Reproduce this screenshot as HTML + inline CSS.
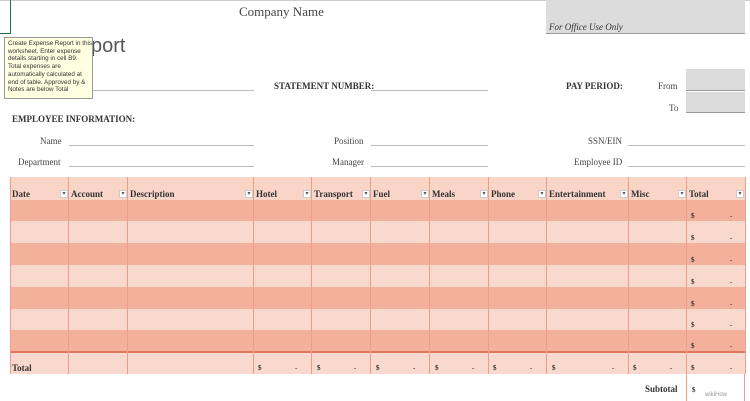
<!DOCTYPE html>
<html><head><meta charset="utf-8"><style>
*{margin:0;padding:0;box-sizing:border-box}
body{width:750px;height:401px;background:#fff;position:relative;overflow:hidden;font-family:"Liberation Serif",serif;color:#333}
.a{position:absolute;white-space:nowrap}
.ln{position:absolute;height:1px;background:#bbb}
.lbl{font-size:9px;color:#444}
.b{font-weight:bold;font-size:9px;color:#333}
.col{position:absolute;top:177px;height:197px;width:1px;background:#e8a08c}
.row{position:absolute;left:10px;width:735px}
.dd{position:absolute;width:8px;height:8px;background:#fff;border:1px solid #ccc;font-size:6px;line-height:6px;text-align:center;color:#555}
.s{position:absolute;font-size:7px;font-weight:bold;color:#333}
</style></head><body>
<div class="ln" style="left:0;top:0;width:750px;background:#ccc"></div>
<div class="a" style="left:0;top:0;width:11px;height:34px;border:1px solid #217346;border-left:none;border-top:none"></div>
<div class="a" style="left:239px;top:4px;font-size:13px;color:#444">Company Name</div>
<div class="a" style="left:546px;top:0;width:199px;height:34px;background:#dcdcdc;border-bottom:1px solid #999"></div>
<div class="a" style="left:549px;top:22px;font-size:9px;font-style:italic;color:#333">For Office Use Only</div>
<div class="a" style="left:91px;top:35px;font-family:'Liberation Sans',sans-serif;font-size:20px;color:#555">port</div>
<div class="a" style="left:4px;top:37px;width:89px;height:62px;background:#ffffe1;border:1px solid #999;font-family:'Liberation Sans',sans-serif;font-size:6.3px;line-height:7.7px;color:#333;padding:2px 3px">Create Expense Report in this<br>worksheet. Enter expense<br>details starting in cell B9.<br>Total expenses are<br>automatically calculated at<br>end of table. Approved by &amp;<br>Notes are below Total</div>
<div class="ln" style="left:93px;top:90px;width:161px"></div>
<div class="a b" style="left:274px;top:81px">STATEMENT NUMBER:</div>
<div class="ln" style="left:371px;top:90px;width:117px"></div>
<div class="a b" style="left:566px;top:81px">PAY PERIOD:</div>
<div class="a lbl" style="left:658px;top:81px">From</div>
<div class="a" style="left:686px;top:69px;width:59px;height:22px;background:#dcdcdc;border-bottom:1px solid #999"></div>
<div class="a lbl" style="left:669px;top:103px">To</div>
<div class="a" style="left:686px;top:92px;width:59px;height:21px;background:#dcdcdc;border-bottom:1px solid #999"></div>
<div class="a b" style="left:12px;top:114px">EMPLOYEE INFORMATION:</div>
<div class="a lbl" style="left:40px;top:136px">Name</div>
<div class="ln" style="left:69px;top:145px;width:185px"></div>
<div class="a lbl" style="left:334px;top:136px">Position</div>
<div class="ln" style="left:371px;top:145px;width:117px"></div>
<div class="a lbl" style="left:588px;top:136px">SSN/EIN</div>
<div class="ln" style="left:628px;top:145px;width:117px"></div>
<div class="a lbl" style="left:18px;top:157px">Department</div>
<div class="ln" style="left:69px;top:166px;width:185px"></div>
<div class="a lbl" style="left:332px;top:157px">Manager</div>
<div class="ln" style="left:371px;top:166px;width:117px"></div>
<div class="a lbl" style="left:574px;top:157px">Employee ID</div>
<div class="ln" style="left:628px;top:166px;width:117px"></div>
<div class="row" style="top:177px;height:23px;background:#f9d5c8"></div>
<div class="row" style="top:200px;height:21px;background:#f3b09b"></div>
<div class="row" style="top:221px;height:22px;background:#f9d9cd"></div>
<div class="row" style="top:243px;height:22px;background:#f3b09b"></div>
<div class="row" style="top:265px;height:22px;background:#f9d9cd"></div>
<div class="row" style="top:287px;height:22px;background:#f3b09b"></div>
<div class="row" style="top:309px;height:21px;background:#f9d9cd"></div>
<div class="row" style="top:330px;height:21px;background:#f3b09b"></div>
<div class="row" style="top:351px;height:23px;background:#f9d9cd;border-top:2px solid #e07860"></div>
<div class="col" style="left:10px"></div><div class="col" style="left:68px"></div><div class="col" style="left:127px"></div><div class="col" style="left:253px"></div><div class="col" style="left:311px"></div><div class="col" style="left:370px"></div><div class="col" style="left:429px"></div><div class="col" style="left:488px"></div><div class="col" style="left:546px"></div><div class="col" style="left:628px"></div><div class="col" style="left:686px"></div><div class="col" style="left:745px"></div>
<div class="a b" style="left:12px;top:189px">Date</div><div class="dd" style="left:60px;top:190px">▾</div>
<div class="a b" style="left:71px;top:189px">Account</div><div class="dd" style="left:119px;top:190px">▾</div>
<div class="a b" style="left:130px;top:189px">Description</div><div class="dd" style="left:245px;top:190px">▾</div>
<div class="a b" style="left:256px;top:189px">Hotel</div><div class="dd" style="left:303px;top:190px">▾</div>
<div class="a b" style="left:314px;top:189px">Transport</div><div class="dd" style="left:362px;top:190px">▾</div>
<div class="a b" style="left:373px;top:189px">Fuel</div><div class="dd" style="left:421px;top:190px">▾</div>
<div class="a b" style="left:432px;top:189px">Meals</div><div class="dd" style="left:480px;top:190px">▾</div>
<div class="a b" style="left:491px;top:189px">Phone</div><div class="dd" style="left:538px;top:190px">▾</div>
<div class="a b" style="left:549px;top:189px">Entertainment</div><div class="dd" style="left:620px;top:190px">▾</div>
<div class="a b" style="left:631px;top:189px">Misc</div><div class="dd" style="left:678px;top:190px">▾</div>
<div class="a b" style="left:689px;top:189px">Total</div><div class="dd" style="left:736px;top:190px">▾</div>
<div class="s" style="left:691px;top:212px">$</div><div class="s" style="left:730px;top:212px">-</div>
<div class="s" style="left:691px;top:234px">$</div><div class="s" style="left:730px;top:234px">-</div>
<div class="s" style="left:691px;top:256px">$</div><div class="s" style="left:730px;top:256px">-</div>
<div class="s" style="left:691px;top:278px">$</div><div class="s" style="left:730px;top:278px">-</div>
<div class="s" style="left:691px;top:300px">$</div><div class="s" style="left:730px;top:300px">-</div>
<div class="s" style="left:691px;top:321px">$</div><div class="s" style="left:730px;top:321px">-</div>
<div class="s" style="left:691px;top:342px">$</div><div class="s" style="left:730px;top:342px">-</div>
<div class="a b" style="left:12px;top:363px">Total</div>
<div class="s" style="left:258px;top:364px">$</div><div class="s" style="left:295px;top:364px">-</div>
<div class="s" style="left:317px;top:364px">$</div><div class="s" style="left:354px;top:364px">-</div>
<div class="s" style="left:376px;top:364px">$</div><div class="s" style="left:413px;top:364px">-</div>
<div class="s" style="left:435px;top:364px">$</div><div class="s" style="left:472px;top:364px">-</div>
<div class="s" style="left:493px;top:364px">$</div><div class="s" style="left:530px;top:364px">-</div>
<div class="s" style="left:552px;top:364px">$</div><div class="s" style="left:612px;top:364px">-</div>
<div class="s" style="left:633px;top:364px">$</div><div class="s" style="left:670px;top:364px">-</div>
<div class="s" style="left:691px;top:364px">$</div><div class="s" style="left:730px;top:364px">-</div>
<div class="a" style="left:686px;top:374px;width:1px;height:27px;background:#e8a08c"></div>
<div class="a" style="left:744px;top:374px;width:1px;height:27px;background:#e8a08c"></div>
<div class="a b" style="left:645px;top:384px">Subtotal</div>
<div class="s" style="left:692px;top:386px">$</div>
<div class="a" style="left:705px;top:392px;font-size:6px;color:#999;font-family:'Liberation Sans',sans-serif">wikiHow</div>
</body></html>
